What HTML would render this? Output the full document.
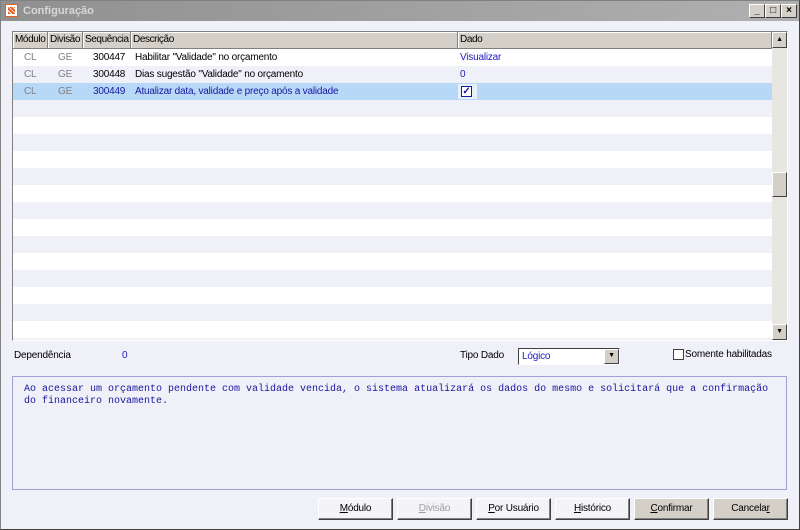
<!DOCTYPE html>
<html><head><meta charset="utf-8"><style>
*{box-sizing:border-box;margin:0;padding:0}
body{width:800px;height:530px;overflow:hidden;font-family:"Liberation Sans",sans-serif;font-size:10px;letter-spacing:-0.2px;background:#f0f0f8;position:relative;color:#000}
.abs{position:absolute}
#frame{left:0;top:0;width:800px;height:530px;border:1px solid #808080;border-right-color:#404040;border-bottom-color:#404040}
#title{left:1px;top:1px;width:798px;height:20px;background:linear-gradient(to right,#909090,#b0b0b0);color:#d8d8d8;font-weight:bold;font-size:11px;line-height:20px;padding-left:22px;letter-spacing:0}
.tb{top:4px;width:16px;height:14px;background:#d4d0c8;border:1px solid;border-color:#fff #404040 #404040 #fff;font-size:10px;line-height:11px;text-align:center;font-weight:bold}
#grid{left:12px;top:31px;width:776px;height:310px;border:1px solid;border-color:#808080 #fff #fff #808080;background:#fff;overflow:hidden}
.hd{top:0;height:17px;background:#d4d0c8;border-right:1px solid #808080;border-bottom:1px solid #808080;line-height:16px;padding-left:2px;box-shadow:inset 1px 1px 0 #fff;white-space:nowrap;overflow:hidden;letter-spacing:-0.4px}
.row{left:0;width:759px;height:17px;line-height:17px}
.c{position:absolute;top:0;white-space:nowrap}
.btn{top:498px;width:75px;height:22px;border:1px solid;border-color:#fff #404040 #404040 #fff;text-align:center;line-height:20px;box-shadow:inset -1px -1px 0 #808080}
u{text-decoration:underline}
</style></head><body>
<div id="frame" class="abs"></div>
<div id="title" class="abs">Configuração</div>
<div class="abs" style="left:5px;top:4px;width:13px;height:13px;background:#fff;border:1px solid #e86020"><div style="margin:2px;width:7px;height:7px;background:repeating-linear-gradient(45deg,#e86020 0 2px,#fff 2px 3px)"></div></div>
<div class="abs tb" style="left:749px">_</div>
<div class="abs tb" style="left:765px">□</div>
<div class="abs tb" style="left:781px">×</div>

<div id="grid" class="abs">
 <div class="abs hd" style="left:0;width:35px">Módulo</div>
 <div class="abs hd" style="left:35px;width:35px">Divisão</div>
 <div class="abs hd" style="left:70px;width:48px">Sequência</div>
 <div class="abs hd" style="left:118px;width:327px">Descrição</div>
 <div class="abs hd" style="left:445px;width:314px">Dado</div>
 <div class="abs" style="left:0;top:17px;width:759px;height:300px;background:repeating-linear-gradient(#fff 0 17px,#f0f0f8 17px 34px)"></div>
 <div class="abs row" style="top:17px"><span class="c" style="left:11px;color:#808080">CL</span><span class="c" style="left:45px;color:#808080">GE</span><span class="c" style="left:80px">300447</span><span class="c" style="left:122px">Habilitar "Validade" no orçamento</span><span class="c" style="left:447px;color:#2020c0">Visualizar</span></div>
 <div class="abs row" style="top:34px"><span class="c" style="left:11px;color:#808080">CL</span><span class="c" style="left:45px;color:#808080">GE</span><span class="c" style="left:80px">300448</span><span class="c" style="left:122px">Dias sugestão "Validade" no orçamento</span><span class="c" style="left:447px;color:#2020c0">0</span></div>
 <div class="abs row" style="top:51px;background:#b8d8f8;color:#1818a0"><span class="c" style="left:11px;color:#808080">CL</span><span class="c" style="left:45px;color:#808080">GE</span><span class="c" style="left:80px">300449</span><span class="c" style="left:122px">Atualizar data, validade e preço após a validade</span>
  <span class="c" style="left:445px;top:1px;width:19px;height:15px;background:#e8f0fc"><span class="abs" style="left:3px;top:2px;width:11px;height:11px;border:1px solid #1818a0;background:#fff;font-size:10px;line-height:9px;text-align:center;font-weight:bold">✓</span></span></div>
 <div class="abs" style="left:759px;top:0;width:15px;height:308px;background:#e8e6e0"></div>
 <div class="abs tb" style="left:759px;top:0;width:15px;height:16px;font-size:7px;line-height:13px">▲</div>
 <div class="abs tb" style="left:759px;top:140px;width:15px;height:25px"></div>
 <div class="abs tb" style="left:759px;top:292px;width:15px;height:16px;font-size:7px;line-height:13px">▼</div>
</div>

<div class="abs" style="left:14px;top:350px">Dependência</div>
<div class="abs" style="left:122px;top:350px;color:#2020c0">0</div>
<div class="abs" style="left:460px;top:350px">Tipo Dado</div>
<div class="abs" style="left:518px;top:348px;width:102px;height:17px;background:#fff;border:1px solid;border-color:#404040 #fff #fff #404040;color:#2020c0;padding-left:3px;line-height:16px">Lógico
 <div class="abs tb" style="left:85px;top:0;width:15px;height:15px;font-size:7px;line-height:12px;color:#000">▼</div></div>
<div class="abs" style="left:673px;top:349px;width:11px;height:11px;border:1px solid #404040;background:#fff"></div>
<div class="abs" style="left:685px;top:349px">Somente habilitadas</div>

<div class="abs" style="left:12px;top:376px;width:775px;height:114px;border:1px solid #a0a0d8;background:#f0f0f8;color:#1818a0;font-family:'Liberation Mono',monospace;font-size:10px;letter-spacing:0;line-height:12px;padding:7px 11px;white-space:nowrap">Ao acessar um orçamento pendente com validade vencida, o sistema atualizará os dados do mesmo e solicitará que a confirmação<br>do financeiro novamente.</div>

<div class="abs btn" style="left:318px;background:#f4f4f8"><u>M</u>ódulo</div>
<div class="abs btn" style="left:397px;background:#f4f4f8;color:#a0a0a0"><u>D</u>ivisão</div>
<div class="abs btn" style="left:476px;background:#f4f4f8"><u>P</u>or Usuário</div>
<div class="abs btn" style="left:555px;background:#f4f4f8"><u>H</u>istórico</div>
<div class="abs btn" style="left:634px;background:#d4d0c8"><u>C</u>onfirmar</div>
<div class="abs btn" style="left:713px;background:#d4d0c8">Cancela<u>r</u></div>
</body></html>
